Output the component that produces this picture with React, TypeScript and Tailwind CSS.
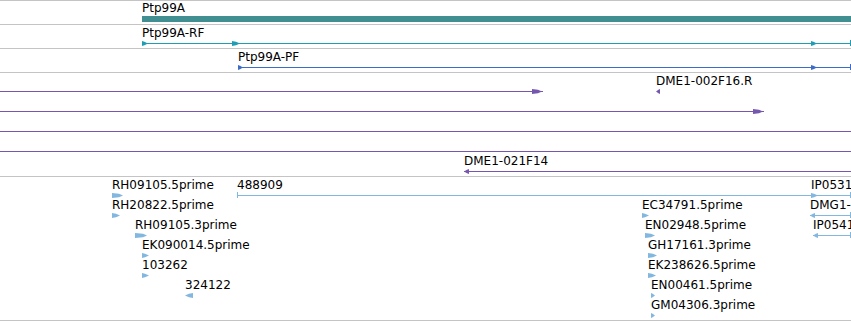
import React from "react";

// genome browser view: tracks and lanes flow top to bottom; inside a lane a feature sits at its genomic x
const font = { fontFamily: '"DejaVu Sans", Verdana, sans-serif' };

const W = 851;
const TEAL = "#418f90";
const RF = "#1e9db3";
const PF = "#3d6cc6";
const PURPLE = "#7557b0";
const EST = "#82b7df";

type Mark = { at: number; w: number; dir?: "left" | "right" };
type Feature = {
  x: number;
  end?: number;
  label?: string;
  color: string;
  line?: boolean;
  arrows?: Mark[];
  ticks?: number[];
};

const arrowPts = (m: Mark, h: number) => {
  const tip = Math.min(4, m.w * 0.6);
  const a = m.at;
  const b = m.at + m.w;
  return m.dir === "left"
    ? `${b},0 ${a + tip},0.8 ${a},${h / 2} ${a + tip},${h - 0.8} ${b},${h}`
    : `${a},0 ${b - tip},0.8 ${b},${h / 2} ${b - tip},${h - 0.8} ${a},${h}`;
};

const FeatureGlyph = ({ f }: { f: Feature }) => {
  const end = f.end ?? f.x + Math.max(...(f.arrows ?? [{ at: 0, w: 6 }]).map((m) => m.at + m.w));
  const w = end - f.x;
  const h = 6;
  return (
    <div className="absolute top-0 flex flex-col pt-[2px]" style={{ left: f.x }}>
      <span className="h-[12px] whitespace-nowrap text-[12px] leading-[12px] text-black">{f.label}</span>
      <svg className="mt-[1px] block" width={w} height={h}>
        {f.line && <rect x={0} y={3} width={w} height={1} fill={f.color} />}
        {(f.arrows ?? []).map((m, i) => (
          <polygon key={i} points={arrowPts(m, 5)} transform="translate(0,1)" fill={f.color} />
        ))}
        {(f.ticks ?? []).map((t) => (
          <rect key={t} x={t} y={0} width={1} height={h} fill={f.color} />
        ))}
      </svg>
    </div>
  );
};

const Lane = ({ features }: { features: Feature[] }) => (
  <div className="relative h-[20px]">
    {features.map((f, i) => (
      <FeatureGlyph key={i} f={f} />
    ))}
  </div>
);

const Track = ({ lanes }: { lanes: Feature[][] }) => (
  <div className="flex flex-col pb-[3px] border-b border-[#c4c4c4]">
    {lanes.map((l, i) => (
      <Lane key={i} features={l} />
    ))}
  </div>
);

const est = (x: number, label: string, w: number, dir: "left" | "right" = "right"): Feature => ({
  x,
  label,
  color: EST,
  arrows: [{ at: 0, w, dir }],
});

const rf: Feature[][] = [
  [
    {
      x: 142,
      end: W,
      label: "Ptp99A-RF",
      color: RF,
      line: true,
      arrows: [{ at: 0, w: 6 }, { at: 90, w: 8 }, { at: 669, w: 6 }],
      ticks: [708],
    },
  ],
];

const pf: Feature[][] = [
  [
    {
      x: 238,
      end: W,
      label: "Ptp99A-PF",
      color: PF,
      line: true,
      arrows: [{ at: 0, w: 5 }, { at: 573, w: 6 }],
      ticks: [612],
    },
  ],
];

const clones: Feature[][] = [
  [
    { x: 0, end: 543, color: PURPLE, line: true, arrows: [{ at: 532, w: 10 }] },
    { x: 656, label: "DME1-002F16.R", color: PURPLE, arrows: [{ at: 0, w: 4, dir: "left" }] },
  ],
  [{ x: 0, end: 764, color: PURPLE, line: true, arrows: [{ at: 753, w: 10 }] }],
  [{ x: 0, end: W, color: PURPLE, line: true }],
  [{ x: 0, end: W, color: PURPLE, line: true }],
  [{ x: 464, end: W, label: "DME1-021F14", color: PURPLE, line: true, arrows: [{ at: 0, w: 5, dir: "left" }] }],
];

const ests: Feature[][] = [
  [
    est(112, "RH09105.5prime", 11),
    { x: 237, end: 813, label: "488909", color: EST, line: true, ticks: [0], arrows: [{ at: 574, w: 2 }] },
    { x: 811, end: W, label: "IP05311", color: EST, line: true, arrows: [{ at: 0, w: 7 }], ticks: [39] },
  ],
  [
    est(112, "RH20822.5prime", 8),
    est(642, "EC34791.5prime", 7),
    { x: 810, end: W, label: "DMG1-1", color: EST, line: true, arrows: [{ at: 0, w: 5, dir: "left" }], ticks: [40] },
  ],
  [
    est(135, "RH09105.3prime", 12),
    est(645, "EN02948.5prime", 10),
    { x: 813, end: W, label: "IP05411", color: EST, line: true, arrows: [{ at: 0, w: 5, dir: "left" }], ticks: [37] },
  ],
  [est(142, "EK090014.5prime", 7), est(648, "GH17161.3prime", 9)],
  [est(142, "103262", 7), est(648, "EK238626.5prime", 8)],
  [est(185, "324122", 8, "left"), est(651, "EN00461.5prime", 4)],
  [est(651, "GM04306.3prime", 4)],
];

const App = () => {
  return (
    <div className="w-[851px] h-[321px] bg-white overflow-hidden" style={font}>
      <div className="border-t border-[#c4c4c4]">
        {/* gene */}
        <div className="flex flex-col h-[24px] pt-[1px] border-b border-[#c4c4c4]">
          <span className="ml-[142px] h-[12px] text-[12px] leading-[12px] text-black">Ptp99A</span>
          <div className="ml-[142px] mt-[2px] h-[6px] bg-[#418f90]" style={{ background: TEAL }} />
        </div>
        <Track lanes={rf} />
        <Track lanes={pf} />
        <Track lanes={clones} />
        <Track lanes={ests} />
      </div>
    </div>
  );
};

export default App;
